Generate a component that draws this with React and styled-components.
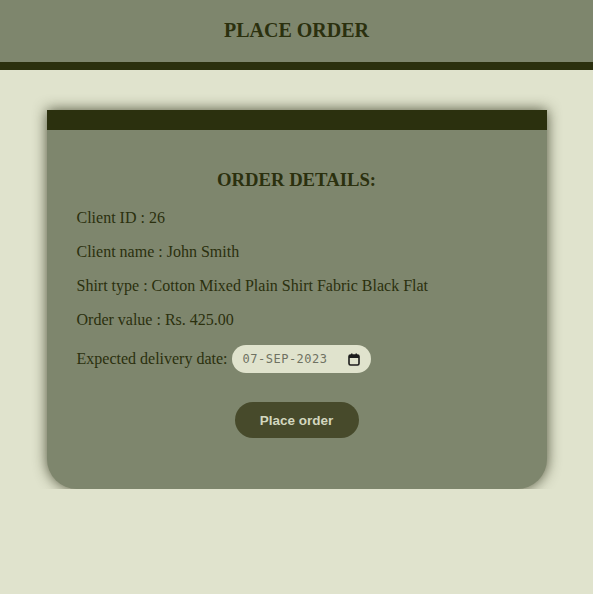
import React from "react";
import styled, { createGlobalStyle } from "styled-components";

const GlobalStyle = createGlobalStyle`
  body {
    margin: 0;
    background: #e0e3cd;
    font-family: "Liberation Serif", "Times New Roman", serif;
    color: #2b300e;
  }
`;

//헤더
const Header = styled.header`
  height: 70px;
  box-sizing: border-box;
  padding-bottom: 2px;
  background: #7e866d;
  border-bottom: 8px solid #2b300e;
  display: flex;
  align-items: center;
  justify-content: center;
`;

const Title = styled.h1`
  margin: 0;
  font-size: 20px;
  font-weight: bold;
  color: #2b300e;
`;

//카드
const Card = styled.div`
  width: 500px;
  margin: 40px auto 0;
  background: #7e866d;
  border-radius: 0 0 30px 30px;
  box-shadow: 0 0 14px rgba(40, 44, 20, 0.8);
  overflow: hidden;
`;

const Band = styled.div`
  height: 20px;
  background: #2b300e;
`;

const Body = styled.div`
  padding: 39px 30px 51px;
`;

const SubTitle = styled.h2`
  margin: 0 0 17px;
  text-align: center;
  font-size: 18.7px;
  font-weight: bold;
`;

const Line = styled.p`
  margin: 0;
  height: 34px;
  line-height: 20px;
  font-size: 16px;
`;

const DateRow = styled.div`
  display: flex;
  align-items: center;
  gap: 4px;
  margin-top: 1px;
  font-size: 16px;
`;

const DateBox = styled.div`
  display: flex;
  align-items: center;
  justify-content: space-between;
  width: 139px;
  height: 28px;
  box-sizing: border-box;
  padding: 0 11px 0 11px;
  background: #e0e3cd;
  border-radius: 14px;
  font-family: "DejaVu Sans Mono", "Liberation Mono", monospace;
  font-size: 12px;
  letter-spacing: 0.5px;
  color: #6f7262;
`;

const ButtonRow = styled.div`
  display: flex;
  justify-content: center;
  margin-top: 29px;
`;

const Button = styled.button`
  width: 124px;
  height: 36px;
  border: none;
  border-radius: 18px;
  background: #474a2b;
  color: #d3d7bf;
  font-family: "Liberation Sans", Arial, sans-serif;
  font-weight: bold;
  font-size: 13.5px;
  cursor: pointer;
`;

const CalendarIcon = () => (
  <svg width="12" height="13" viewBox="0 0 12 13">
    <rect x="1" y="2" width="10" height="10" rx="1.5" fill="none" stroke="#1c1c1c" strokeWidth="1.6" />
    <rect x="1" y="2" width="10" height="3" fill="#1c1c1c" />
    <rect x="3" y="0.5" width="1.5" height="2.5" fill="#1c1c1c" />
    <rect x="7.5" y="0.5" width="1.5" height="2.5" fill="#1c1c1c" />
  </svg>
);

export default function App() {
  return (
    <>
      <GlobalStyle />
      <Header>
        <Title>PLACE ORDER</Title>
      </Header>
      <Card>
        <Band />
        <Body>
          <SubTitle>ORDER DETAILS:</SubTitle>
          <Line>Client ID : 26</Line>
          <Line>Client name : John Smith</Line>
          <Line>Shirt type : Cotton Mixed Plain Shirt Fabric Black Flat</Line>
          <Line>Order value : Rs. 425.00</Line>
          <DateRow>
            <span>Expected delivery date:</span>
            <DateBox>
              <span>07-SEP-2023</span>
              <CalendarIcon />
            </DateBox>
          </DateRow>
          <ButtonRow>
            <Button>Place order</Button>
          </ButtonRow>
        </Body>
      </Card>
    </>
  );
}
